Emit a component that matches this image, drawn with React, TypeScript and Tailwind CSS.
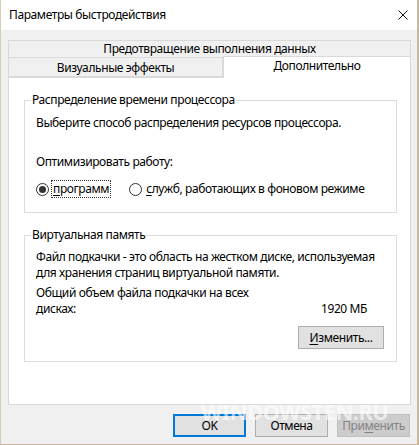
import React from 'react';

function Radio({ checked }: { checked?: boolean }) {
  return (
    <span className="flex h-[13px] w-[13px] items-center justify-center rounded-full border border-[#333333] bg-white">
      {checked && <span className="h-[7px] w-[7px] rounded-full bg-[#333333]" />}
    </span>
  );
}

export default function App() {
  return (
    <div
      className="relative flex h-[445px] w-[419px] flex-col overflow-hidden border-x border-b border-l-[#d6cab9] border-r-2 border-r-[#c9b89f] border-b-[#c9b89f] text-[12px] tracking-[-0.4px] text-black"
      style={{ fontFamily: '"Noto Sans", "Liberation Sans", sans-serif' }}
    >
      {/* Title bar */}
      <div className="flex h-[30px] items-center justify-between bg-white pl-[8px] pr-[8px]">
        <span>Параметры быстродействия</span>
        <svg width="10" height="10" viewBox="0 0 10 10" className="mr-[1px]">
          <path d="M0.5 0.5 L9.5 9.5 M9.5 0.5 L0.5 9.5" stroke="#111" strokeWidth="1" />
        </svg>
      </div>

      {/* Body */}
      <div className="flex flex-1 flex-col bg-[#f0f0f0] pl-[7px] pr-[6px] pt-[10px]">
        {/* Tabs */}
        <div className="flex h-[17px] items-center justify-center border border-b-0 border-[#d9d9d9] leading-none">
          Предотвращение выполнения данных
        </div>
        <div className="flex h-[20px]">
          <div className="flex w-[215px] items-center justify-center border border-[#d9d9d9] pt-[1px] leading-none">
            Визуальные эффекты
          </div>
          <div className="relative z-10 -mt-[1px] flex h-[22px] flex-1 items-start justify-center border border-b-0 border-x-[#d9d9d9] border-t-[#d9d9d9] bg-white pt-[3px] leading-none">
            Дополнительно
          </div>
        </div>

        {/* Panel */}
        <div className="flex h-[328px] flex-col border border-[#d9d9d9] bg-white pl-[15px] pr-[13px] pt-[14px]">
          <fieldset className="border border-[#dcdcdc] pb-[14px] pl-[11px]">
            <legend className="-ml-[5px] px-[1px] leading-[16px]">Распределение времени процессора</legend>
            <div className="mt-[7px] leading-[16px]">Выберите способ распределения ресурсов процессора.</div>
            <div className="mt-[23px] leading-[16px]">Оптимизировать работу:</div>
            <div className="mt-[10px] flex items-center leading-[16px]">
              <Radio checked />
              <span className="ml-[2px] border border-dotted border-[#333] px-[1px]">
                <span className="underline underline-offset-2">п</span>рограмм
              </span>
              <span className="ml-[18px]">
                <Radio />
              </span>
              <span className="ml-[4px]">
                <span className="underline underline-offset-2">с</span>лужб, работающих в фоновом режиме
              </span>
            </div>
          </fieldset>

          <fieldset className="mt-[14px] border border-[#dcdcdc] pb-[12px] pl-[11px] pr-[12px]">
            <legend className="-ml-[5px] px-[1px] leading-[16px]">Виртуальная память</legend>
            <div className="mt-[6px] leading-[16px]">
              Файл подкачки - это область на жестком диске, используемая для хранения страниц виртуальной памяти.
            </div>
            <div className="mt-[4px] flex items-end justify-between leading-[16px]">
              <div className="w-[225px]">Общий объем файла подкачки на всех дисках:</div>
              <div className="mr-[17px]">1920 МБ</div>
            </div>
            <div className="mt-[9px] flex justify-end">
              <button className="h-[23px] w-[86px] border border-[#adadad] bg-[#e1e1e1] leading-none">
                <span className="underline underline-offset-2">И</span>зменить...
              </button>
            </div>
          </fieldset>
        </div>

        {/* Bottom buttons */}
        <div className="mt-[9px] flex justify-end gap-[9px] pr-[1px]">
          <button className="h-[23px] w-[73px] border-2 border-[#0078d7] bg-[#e1e1e1] leading-none">OK</button>
          <button className="h-[23px] w-[73px] border border-[#adadad] bg-[#e1e1e1] leading-none">Отмена</button>
          <button className="h-[23px] w-[73px] border border-[#bfbfbf] bg-[#cccccc] leading-none text-[#838383]">
            При<span className="underline underline-offset-2">м</span>енить
          </button>
        </div>
      </div>

      {/* Watermark */}
      <div className="pointer-events-none absolute left-[200px] top-[400px] text-[22px] font-bold leading-none tracking-tight text-white/60">
        WINDOWSTEN.RU
      </div>
    </div>
  );
}
